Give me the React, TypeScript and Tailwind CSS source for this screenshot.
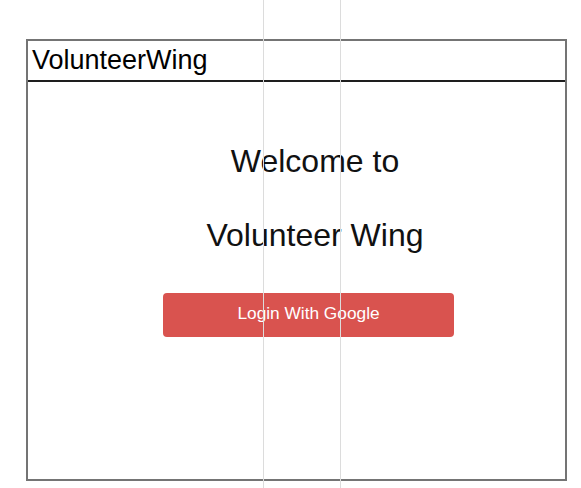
import React from "react";

export default function App() {
  return (
    <div
      className="relative w-[581px] h-[488px] bg-white overflow-hidden"
      style={{ fontFamily: '"Liberation Sans", Arial, sans-serif' }}
    >
      <div className="pt-[39px] pl-[26px]">
        <div className="w-[541px] h-[442px] border-2 border-[#747474] flex flex-col">
          <div className="h-[41px] border-b-2 border-[#1e1e1e] pl-[4px] pt-[4px]">
            <span className="text-[27px] leading-[31px] text-black">VolunteerWing</span>
          </div>
          <div className="flex flex-col">
            <div className="pl-[37px] pt-[61px] text-center text-[32px] leading-[37px] text-[#111]">
              Welcome to
            </div>
            <div className="pl-[37px] pt-[37px] text-center text-[32px] leading-[37px] text-[#111]">
              Volunteer Wing
            </div>
            <div className="pl-[135px] pt-[39px]">
              <button className="w-[291px] h-[44px] rounded-[4px] bg-[#d9534f] text-white text-[17.3px] flex items-center justify-center pb-[3px]">
                Login With Google
              </button>
            </div>
          </div>
        </div>
      </div>
      <div className="pointer-events-none absolute top-0 left-[263px] w-px h-full bg-[#dcdcdc]" />
      <div className="pointer-events-none absolute top-0 left-[340px] w-px h-full bg-[#dcdcdc]" />
    </div>
  );
}
